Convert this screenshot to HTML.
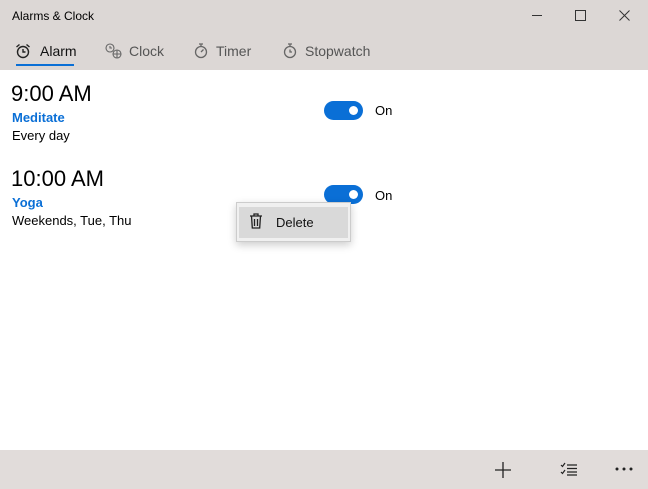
<!DOCTYPE html>
<html><head><style>
*{margin:0;padding:0;box-sizing:border-box}
body{width:648px;height:489px;overflow:hidden;font-family:"Liberation Sans",sans-serif;background:#fff;position:relative;color:#000}
.hdr{position:absolute;left:0;top:0;width:648px;height:70px;background:#dcd7d5}
.bot{position:absolute;left:0;top:450px;width:648px;height:39px;background:#e1dcda}
.t{position:absolute;white-space:nowrap}
.tab{position:absolute;top:43px;font-size:14px;color:#555}
.tgl{position:absolute;width:39px;height:19px;border-radius:10px;background:#0a6fd6}
.tgl::after{content:"";position:absolute;right:5px;top:5px;width:9px;height:9px;border-radius:50%;background:#fff}
</style></head><body>
<div class="hdr"></div>
<div class="t" style="left:12px;top:9px;font-size:12px">Alarms &amp; Clock</div>
<svg style="position:absolute;left:525px;top:5px" width="110" height="20" fill="none" stroke="#333" stroke-width="1"><path d="M7 10.5h10"/><rect x="50.5" y="5.5" width="10" height="10"/><path d="M94.5 5.5l10 10M104.5 5.5l-10 10"/></svg>
<svg style="position:absolute;left:15px;top:43px" width="16" height="16" viewBox="0 0 16 16" fill="none" stroke="#222" stroke-width="1.4"><circle cx="8" cy="9" r="5.5"/><path d="M8 6v3h2.5M1.5 4l3-2.5M14.5 4l-3-2.5"/></svg>
<div class="tab" style="left:40px;color:#111">Alarm</div>
<div style="position:absolute;left:16px;top:64px;width:58px;height:2px;background:#0a6fd6"></div>
<svg style="position:absolute;left:105px;top:43px" width="18" height="16" viewBox="0 0 18 16" fill="none" stroke="#666" stroke-width="1.1"><circle cx="5" cy="5" r="4"/><path d="M5 3v2h2"/><circle cx="12" cy="11" r="4"/><path d="M8 11h8M12 7v8"/></svg>
<div class="tab" style="left:129px">Clock</div>
<svg style="position:absolute;left:193px;top:42px" width="16" height="17" viewBox="0 0 16 17" fill="none" stroke="#666" stroke-width="1.3"><circle cx="8" cy="10" r="5.5"/><path d="M6 2h4M8 2v2.5M8 10l2.5-2.5"/></svg>
<div class="tab" style="left:216px">Timer</div>
<svg style="position:absolute;left:282px;top:42px" width="16" height="17" viewBox="0 0 16 17" fill="none" stroke="#666" stroke-width="1.3"><circle cx="8" cy="10" r="5.5"/><path d="M6 2h4M8 2v2.5M8 7.5v2.5h2"/></svg>
<div class="tab" style="left:305px">Stopwatch</div>

<div class="t" style="left:11px;top:81px;font-size:22px">9:00 AM</div>
<div class="t" style="left:12px;top:110px;font-size:13px;font-weight:bold;color:#0a6fd6">Meditate</div>
<div class="t" style="left:12px;top:128px;font-size:13px">Every day</div>
<div class="tgl" style="left:324px;top:101px"></div>
<div class="t" style="left:375px;top:103px;font-size:13px">On</div>

<div class="t" style="left:11px;top:166px;font-size:22px">10:00 AM</div>
<div class="t" style="left:12px;top:195px;font-size:13px;font-weight:bold;color:#0a6fd6">Yoga</div>
<div class="t" style="left:12px;top:213px;font-size:13px">Weekends, Tue, Thu</div>
<div class="tgl" style="left:324px;top:185px"></div>
<div class="t" style="left:375px;top:188px;font-size:13px">On</div>

<div style="position:absolute;left:236px;top:202px;width:115px;height:40px;background:#f0f0f0;border:1px solid #ccc;box-shadow:0 3px 8px rgba(0,0,0,.2)"></div>
<div style="position:absolute;left:239px;top:207px;width:109px;height:31px;background:#d9d9d9"></div>
<svg style="position:absolute;left:249px;top:213px" width="14" height="16" viewBox="0 0 14 16" fill="none" stroke="#222" stroke-width="1.3"><path d="M1 3h12M5 3V1h4v2M2.5 3l.8 12h7.4l.8-12M5.5 6v7M8.5 6v7"/></svg>
<div class="t" style="left:276px;top:215px;font-size:13px;color:#111">Delete</div>

<div class="bot"></div>
<svg style="position:absolute;left:494px;top:461px" width="18" height="18" stroke="#222" stroke-width="1.3"><path d="M9 1v16M1 9h16"/></svg>
<svg style="position:absolute;left:560px;top:462px" width="18" height="14" fill="none" stroke="#222" stroke-width="1.2"><path d="M1 3l1.5 1.5L5 1M1 10l1.5 1.5L5 8M7 3h10M7 6.5h10M7 10h10M7 13h10"/></svg>
<svg style="position:absolute;left:614px;top:466px" width="22" height="6" fill="#222"><circle cx="3" cy="3" r="1.5"/><circle cx="10" cy="3" r="1.5"/><circle cx="17" cy="3" r="1.5"/></svg>
</body></html>
